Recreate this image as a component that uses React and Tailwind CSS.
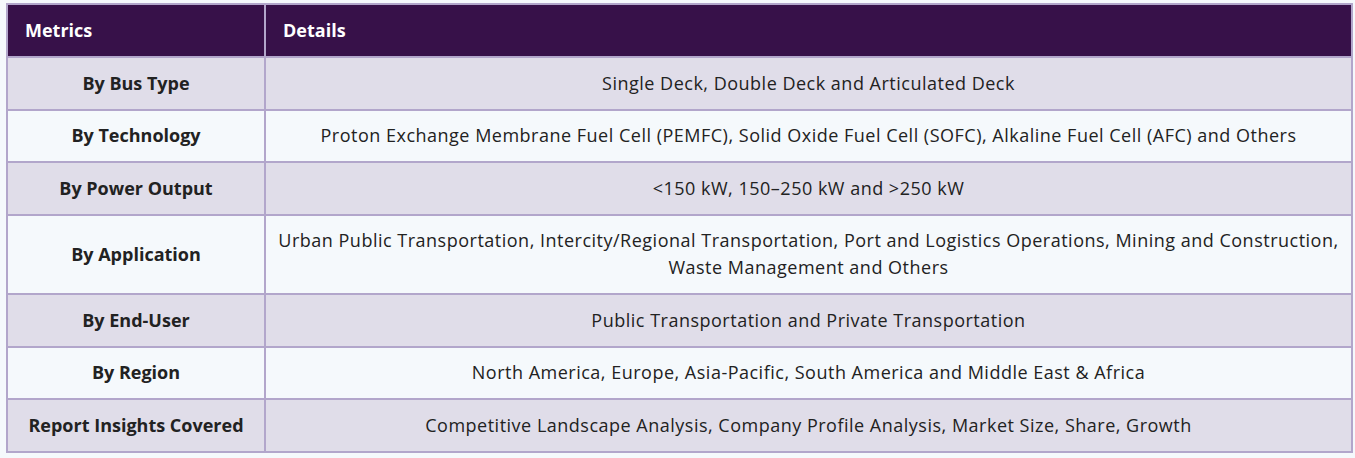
const ROWS = [
  ["By Bus Type", "Single Deck, Double Deck and Articulated Deck"],
  [
    "By Technology",
    "Proton Exchange Membrane Fuel Cell (PEMFC), Solid Oxide Fuel Cell (SOFC), Alkaline Fuel Cell (AFC) and Others"
  ],
  ["By Power Output", "<150 kW, 150–250 kW and >250 kW"],
  [
    "By Application",
    "Urban Public Transportation, Intercity/Regional Transportation, Port and Logistics Operations, Mining and Construction, Waste Management and Others"
  ],
  ["By End-User", "Public Transportation and Private Transportation"],
  ["By Region", "North America, Europe, Asia-Pacific, South America and Middle East & Africa"],
  [
    "Report Insights Covered",
    "Competitive Landscape Analysis, Company Profile Analysis, Market Size, Share, Growth"
  ]
];

export default function App() {
  return (
    <div className="min-h-screen bg-[#f5f9fc] pl-[6px] pt-[3px] pr-[2px] font-['Open_Sans','Noto_Sans',sans-serif] text-[18px] leading-[27px] text-[#222]">
      <table className="w-[1347px] table-fixed border-collapse border-2 border-[#b2a6cb]">
        <colgroup>
          <col className="w-[258px]" />
          <col />
        </colgroup>
        <thead>
          <tr className="bg-[#371149] text-white">
            <th className="border-2 border-[#b2a6cb] px-[17px] py-3 text-left font-bold">Metrics</th>
            <th className="border-2 border-[#b2a6cb] px-[17px] py-3 text-left font-bold">Details</th>
          </tr>
        </thead>
        <tbody>
          {ROWS.map(([metric, detail], i) => (
            <tr key={metric} className={i % 2 === 0 ? "bg-[#e0dde9]" : "bg-[#f5f9fc]"}>
              <td className="border-2 border-[#b2a6cb] px-[17px] py-[11.75px] text-center font-bold">{metric}</td>
              <td className="border-2 border-[#b2a6cb] px-2 py-[11.75px] text-center tracking-[0.5px]">{detail}</td>
            </tr>
          ))}
        </tbody>
      </table>
    </div>
  );
}
